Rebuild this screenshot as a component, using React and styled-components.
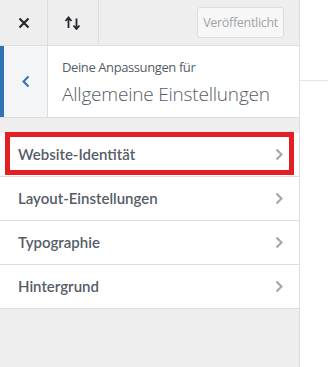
import styled, { createGlobalStyle } from 'styled-components';

const GlobalStyle = createGlobalStyle`
  html, body {
    margin: 0;
    padding: 0;
    background: #fff;
  }
  body {
    font-family: "Open Sans", "Noto Sans", sans-serif;
  }
`;

const Page = styled.div`
  display: flex;
  width: 328px;
  height: 367px;
  overflow: hidden;
`;

const Sidebar = styled.aside`
  width: 299px;
  flex: none;
  background: #eeeeee;
  border-right: 1px solid #dddddd;
  display: flex;
  flex-direction: column;
`;

const Preview = styled.div`
  flex: 1;
  background: #fff;
`;

const PreviewBar = styled.div`
  height: 80px;
  border-bottom: 1px solid #e5e5e5;
`;

const Header = styled.header`
  height: 45px;
  display: flex;
  align-items: center;
  border-bottom: 1px solid #dddddd;
`;

const HeaderButton = styled.button`
  width: ${(p) => p.$width}px;
  height: 45px;
  display: flex;
  align-items: center;
  justify-content: center;
  background: transparent;
  border: 0;
  border-right: 1px solid #dddddd;
  color: #23282d;
  padding: 0;
`;

const PublishButton = styled.button`
  margin-left: auto;
  margin-right: 15px;
  height: 31px;
  padding: 0 5px;
  border: 1px solid #dddddd;
  border-radius: 3px;
  background: #f7f7f7;
  color: #a0a5aa;
  font-family: "Open Sans", "Noto Sans", sans-serif;
  font-size: 12.5px;
  letter-spacing: -0.3px;
`;

const SectionHead = styled.div`
  display: flex;
  height: 71px;
  background: #fff;
  border-bottom: 1px solid #dddddd;
`;

const BackButton = styled.button`
  width: 48px;
  flex: none;
  background: #f3f5f6;
  border: 0;
  border-left: 4px solid #3072b4;
  border-right: 1px solid #dddddd;
  display: flex;
  align-items: center;
  justify-content: center;
  padding: 0;
  color: #2e73b2;
`;

const TitleBlock = styled.div`
  padding: 13px 0 0 14px;
  color: #555d66;
`;

const Subtitle = styled.div`
  font-size: 13px;
  line-height: 16px;
  letter-spacing: -0.4px;
`;

const Title = styled.div`
  font-size: 19px;
  font-weight: 300;
  line-height: 28px;
  margin-top: 5px;
  letter-spacing: -0.2px;
`;

const List = styled.ul`
  list-style: none;
  margin: 15px 0 0;
  padding: 0;
  background: #fff;
`;

const Item = styled.li`
  position: relative;
  height: 43px;
  display: flex;
  align-items: center;
  justify-content: space-between;
  padding: 0 16px 0 18px;
  border-bottom: 1px solid #dddddd;
  color: #555d66;
  font-family: Lato, "Open Sans", sans-serif;
  font-size: 15px;
  font-weight: 600;
`;

const Label = styled.span`
  margin-top: -1px;
`;

const Highlight = styled.span`
  position: absolute;
  top: -1px;
  left: 5px;
  right: 5px;
  bottom: 1px;
  border: 5px solid #e31e24;
  pointer-events: none;
`;

const Chevron = ({ color = '#a0a5aa', dir = 'right' }) => (
  <svg width="8" height="13" viewBox="0 0 8 13" fill="none">
    <path
      d={dir === 'right' ? 'M1.5 1.5 L6.5 6.5 L1.5 11.5' : 'M6.5 1.5 L1.5 6.5 L6.5 11.5'}
      stroke={color}
      strokeWidth="2"
    />
  </svg>
);

const items = ['Website-Identität', 'Layout-Einstellungen', 'Typographie', 'Hintergrund'];

export default function App() {
  return (
    <Page>
      <GlobalStyle />
      <Sidebar>
        <Header>
          <HeaderButton $width={48} aria-label="Schließen">
            <svg width="12" height="12" viewBox="0 0 12 12">
              <path d="M1.5 1.5 L10.5 10.5 M10.5 1.5 L1.5 10.5" stroke="#23282d" strokeWidth="2.2" />
            </svg>
          </HeaderButton>
          <HeaderButton $width={51} aria-label="Sortieren">
            <svg width="18" height="14" viewBox="0 0 18 14">
              <path d="M4.5 12 V2 M1.5 5 L4.5 1.5 L7.5 5" stroke="#23282d" strokeWidth="1.8" fill="none" />
              <path d="M12.5 2.5 V12.5 M9.5 9.5 L12.5 13 L15.5 9.5" stroke="#23282d" strokeWidth="1.8" fill="none" />
            </svg>
          </HeaderButton>
          <PublishButton disabled>Veröffentlicht</PublishButton>
        </Header>
        <SectionHead>
          <BackButton aria-label="Zurück">
            <Chevron dir="left" color="#2e73b2" />
          </BackButton>
          <TitleBlock>
            <Subtitle>Deine Anpassungen für</Subtitle>
            <Title>Allgemeine Einstellungen</Title>
          </TitleBlock>
        </SectionHead>
        <List>
          {items.map((label, i) => (
            <Item key={label}>
              <Label>{label}</Label>
              <Chevron />
              {i === 0 && <Highlight />}
            </Item>
          ))}
        </List>
      </Sidebar>
      <Preview>
        <PreviewBar />
      </Preview>
    </Page>
  );
}
